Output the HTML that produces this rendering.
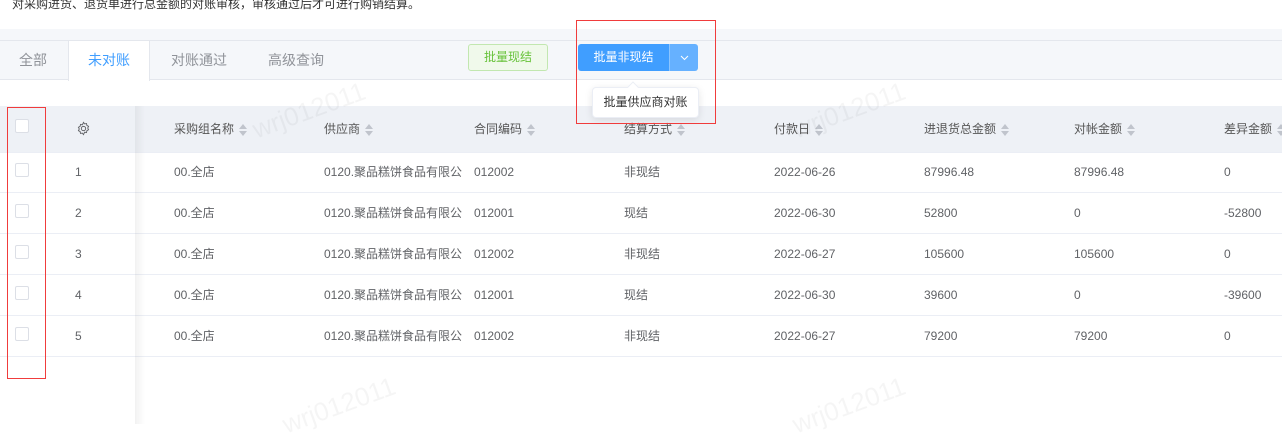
<!DOCTYPE html>
<html><head><meta charset="utf-8"><style>
*{margin:0;padding:0;box-sizing:border-box}
body{width:1282px;height:424px;overflow:hidden;background:#fff;font-family:"Liberation Sans","Noto Sans CJK SC",sans-serif;font-size:12px;color:#606266;position:relative}
.a{position:absolute;white-space:nowrap;line-height:16px}
.sort{display:inline-block;vertical-align:middle;margin-left:5px;width:8px;height:12px;position:relative}
.sort:before{content:"";position:absolute;left:0;top:0;border:4px solid transparent;border-bottom:5px solid #c0c4cc;border-top:0}
.sort:after{content:"";position:absolute;left:0;top:7px;border:4px solid transparent;border-top:5px solid #c0c4cc;border-bottom:0}
.cb{position:absolute;left:15px;width:14px;height:14px;border:1px solid #dcdfe6;border-radius:2px;background:#fff}
.row{position:absolute;left:0;width:1282px;height:41px;border-bottom:1px solid #ebeef5}
.wm{position:absolute;color:rgba(0,0,0,0.04);font-size:26px;transform:rotate(-20deg);white-space:nowrap}
.r span{position:absolute;line-height:16px}
</style></head><body>
<div class="a" style="left:12px;top:-4px;font-size:12px;color:#333">对采购进货、退货单进行总金额的对账审核，审核通过后才可进行购销结算。</div>
<div class="a" style="left:0;top:29px;width:1282px;height:11px;background:#f5f7fa"></div>
<div class="a" style="left:0;top:40px;width:1282px;height:40px;background:#f5f7fa;border-top:1px solid #e4e7ed;border-bottom:1px solid #e4e7ed"></div>
<div class="a" style="left:68px;top:40px;width:82px;height:41px;background:#fff;border-left:1px solid #e4e7ed;border-right:1px solid #e4e7ed;border-top:1px solid #e4e7ed"></div>
<div class="a" style="left:19px;top:52px;font-size:14px;color:#909399">全部</div>
<div class="a" style="left:88px;top:52px;font-size:14px;color:#409eff">未对账</div>
<div class="a" style="left:171px;top:52px;font-size:14px;color:#909399">对账通过</div>
<div class="a" style="left:268px;top:52px;font-size:14px;color:#909399">高级查询</div>
<div class="a" style="left:468px;top:44px;width:80px;height:27px;background:#f0f9eb;border:1px solid #c2e7b0;border-radius:3px;color:#67c23a;text-align:center;line-height:25px">批量现结</div>
<div class="a" style="left:578px;top:44px;width:91px;height:27px;background:#409eff;border-radius:3px 0 0 3px;color:#fff;text-align:center;line-height:27px">批量非现结</div>
<div class="a" style="left:669px;top:44px;width:29px;height:27px;background:#66b1ff;border-left:1px solid #8cc5ff;border-radius:0 3px 3px 0"><svg width="29" height="27"><path d="M11 12l3.5 3.5L18 12" stroke="#fff" fill="none" stroke-width="1"/></svg></div>

<div class="a" style="left:0;top:106px;width:1282px;height:47px;background:#eef1f6;border-bottom:1px solid #ebeef5"></div>
<div class="cb" style="top:119px"></div>
<svg class="a" style="left:76px;top:121px" width="15" height="15" viewBox="0 0 16 16"><path d="M8 1.5l1.2 1.6 2-.4.4 2 1.8 1-.9 1.8.9 1.8-1.8 1-.4 2-2-.4L8 14.5l-1.2-1.6-2 .4-.4-2-1.8-1 .9-1.8-.9-1.8 1.8-1 .4-2 2 .4z" fill="none" stroke="#606266" stroke-width="1"/><circle cx="8" cy="8" r="2.3" fill="none" stroke="#606266"/></svg>
<div class="a" style="left:174px;top:121px;color:#555">采购组名称<span class="sort"></span></div>
<div class="a" style="left:324px;top:121px;color:#555">供应商<span class="sort"></span></div>
<div class="a" style="left:474px;top:121px;color:#555">合同编码<span class="sort"></span></div>
<div class="a" style="left:624px;top:121px;color:#555">结算方式<span class="sort"></span></div>
<div class="a" style="left:774px;top:121px;color:#555">付款日<span class="sort"></span></div>
<div class="a" style="left:924px;top:121px;color:#555">进退货总金额<span class="sort"></span></div>
<div class="a" style="left:1074px;top:121px;color:#555">对帐金额<span class="sort"></span></div>
<div class="a" style="left:1224px;top:121px;color:#555">差异金额<span class="sort"></span></div>

<div class="a" style="left:592px;top:87px;width:107px;height:31px;background:#fff;border:1px solid #ebeef5;border-radius:4px;box-shadow:0 2px 8px rgba(0,0,0,.1);color:#333;line-height:29px;text-align:center">批量供应商对账</div>
<div class="a" style="left:629px;top:83px;width:8px;height:8px;background:#fff;border-left:1px solid #ebeef5;border-top:1px solid #ebeef5;transform:rotate(45deg)"></div>

<div class="row" style="top:152px"></div>
<div class="row" style="top:193px"></div>
<div class="row" style="top:234px"></div>
<div class="row" style="top:275px"></div>
<div class="row" style="top:316px"></div>
<div class="a" style="left:135px;top:106px;width:10px;height:318px;background:linear-gradient(90deg,rgba(0,0,0,.05),rgba(0,0,0,0))"></div>

<div class="cb" style="top:163px"></div><div class="cb" style="top:204px"></div><div class="cb" style="top:245px"></div><div class="cb" style="top:286px"></div><div class="cb" style="top:327px"></div>

<div class="a r" style="top:164px;left:0;width:1282px">
<span style="left:75px">1</span><span style="left:174px">00.全店</span><span style="left:324px">0120.聚品糕饼食品有限公</span><span style="left:474px">012002</span><span style="left:624px">非现结</span><span style="left:774px">2022-06-26</span><span style="left:924px">87996.48</span><span style="left:1074px">87996.48</span><span style="left:1224px">0</span></div>
<div class="a r" style="top:205px;left:0;width:1282px">
<span style="left:75px">2</span><span style="left:174px">00.全店</span><span style="left:324px">0120.聚品糕饼食品有限公</span><span style="left:474px">012001</span><span style="left:624px">现结</span><span style="left:774px">2022-06-30</span><span style="left:924px">52800</span><span style="left:1074px">0</span><span style="left:1224px">-52800</span></div>
<div class="a r" style="top:246px;left:0;width:1282px">
<span style="left:75px">3</span><span style="left:174px">00.全店</span><span style="left:324px">0120.聚品糕饼食品有限公</span><span style="left:474px">012002</span><span style="left:624px">非现结</span><span style="left:774px">2022-06-27</span><span style="left:924px">105600</span><span style="left:1074px">105600</span><span style="left:1224px">0</span></div>
<div class="a r" style="top:287px;left:0;width:1282px">
<span style="left:75px">4</span><span style="left:174px">00.全店</span><span style="left:324px">0120.聚品糕饼食品有限公</span><span style="left:474px">012001</span><span style="left:624px">现结</span><span style="left:774px">2022-06-30</span><span style="left:924px">39600</span><span style="left:1074px">0</span><span style="left:1224px">-39600</span></div>
<div class="a r" style="top:328px;left:0;width:1282px">
<span style="left:75px">5</span><span style="left:174px">00.全店</span><span style="left:324px">0120.聚品糕饼食品有限公</span><span style="left:474px">012002</span><span style="left:624px">非现结</span><span style="left:774px">2022-06-27</span><span style="left:924px">79200</span><span style="left:1074px">79200</span><span style="left:1224px">0</span></div>

<div class="wm" style="left:250px;top:95px">wrj012011</div>
<div class="wm" style="left:790px;top:95px">wrj012011</div>
<div class="wm" style="left:280px;top:390px">wrj012011</div>
<div class="wm" style="left:790px;top:390px">wrj012011</div>

<div class="a" style="left:7px;top:107px;width:39px;height:272px;border:1px solid #f03c3c"></div>
<div class="a" style="left:576px;top:20px;width:140px;height:104px;border:1px solid #f03c3c"></div>
</body></html>
